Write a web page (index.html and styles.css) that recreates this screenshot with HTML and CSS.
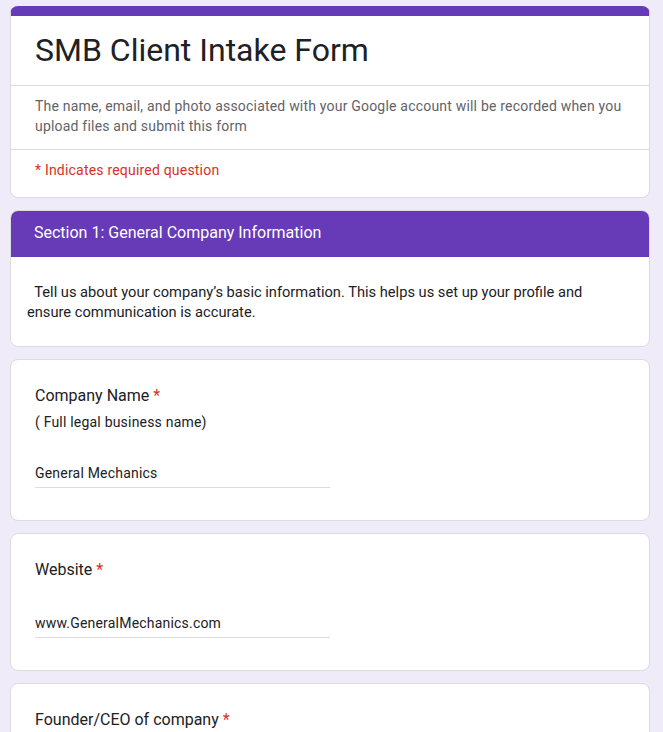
FILE: index.html
```html
<!DOCTYPE html>
<html>
<head>
<meta charset="utf-8">
<link rel="stylesheet" href="styles.css">
</head>
<body>
<div class="form">
  <div class="card header-card">
    <div class="title-block">
      <h1 class="title">SMB Client Intake Form</h1>
    </div>
    <div class="desc-block">The name, email, and photo associated with your Google account will be recorded when you upload files and submit this form</div>
    <div class="req-block">* Indicates required question</div>
  </div>

  <div class="card section-card">
    <div class="section-head">Section 1: General Company Information</div>
    <div class="section-body">&nbsp;&nbsp;Tell us about your company’s basic information. This helps us set up your profile and ensure communication is accurate.</div>
  </div>

  <div class="card question">
    <div class="q-title">Company Name <span class="star">*</span></div>
    <div class="q-desc">( Full legal business name)</div>
    <div class="answer">General Mechanics</div>
  </div>

  <div class="card question">
    <div class="q-title">Website <span class="star">*</span></div>
    <div class="answer">www.GeneralMechanics.com</div>
  </div>

  <div class="card question">
    <div class="q-title">Founder/CEO of company <span class="star">*</span></div>
    <div class="answer">John Smith</div>
  </div>
</div>
</body>
</html>
```

FILE: styles.css
```css
html, body {
  margin: 0;
  padding: 0;
  background: #f0ebf8;
}
body {
  font-family: Roboto, "Noto Sans", Arial, sans-serif;
  color: #202124;
  padding: 6px 0 40px 10px;
}
.form {
  width: 640px;
  display: flex;
  flex-direction: column;
  gap: 12px;
}
.card {
  background: #fff;
  border: 1px solid #dadce0;
  border-radius: 8px;
  box-sizing: border-box;
  overflow: hidden;
}
.header-card {
  border-top: 10px solid #673ab7;
}
.title-block {
  padding: 14px 24px 15px;
  border-bottom: 1px solid #dadce0;
}
.title {
  margin: 0;
  font-size: 32px;
  line-height: 40px;
  font-weight: 400;
  color: #202124;
}
.desc-block {
  padding: 10px 24px 13px;
  font-size: 14px;
  line-height: 20px;
  letter-spacing: 0.2px;
  color: #5f6368;
  border-bottom: 1px solid #dadce0;
}
.req-block {
  padding: 10px 24px 17px;
  font-size: 14px;
  line-height: 20px;
  letter-spacing: 0.2px;
  color: #d93025;
}
.section-head {
  background: #673ab7;
  color: #fff;
  font-size: 16px;
  line-height: 24px;
  padding: 11px 24px 12px;
  margin: -1px -1px 0;
}
.section-body {
  padding: 25px 24px 24px 16px;
  font-size: 14.67px;
  line-height: 20px;
  color: #202124;
}
.question {
  padding: 24px 24px 32px;
}
.q-title {
  font-size: 16px;
  line-height: 24px;
  color: #202124;
}
.star {
  color: #d93025;
}
.q-desc {
  margin-top: 4px;
  font-size: 14px;
  line-height: 20px;
  letter-spacing: 0.2px;
  color: #202124;
}
.answer {
  margin-top: 29px;
  width: 295px;
  font-size: 14px;
  line-height: 24px;
  letter-spacing: 0.2px;
  padding-bottom: 2px;
  border-bottom: 1px solid #dadce0;
  color: #202124;
}
```
